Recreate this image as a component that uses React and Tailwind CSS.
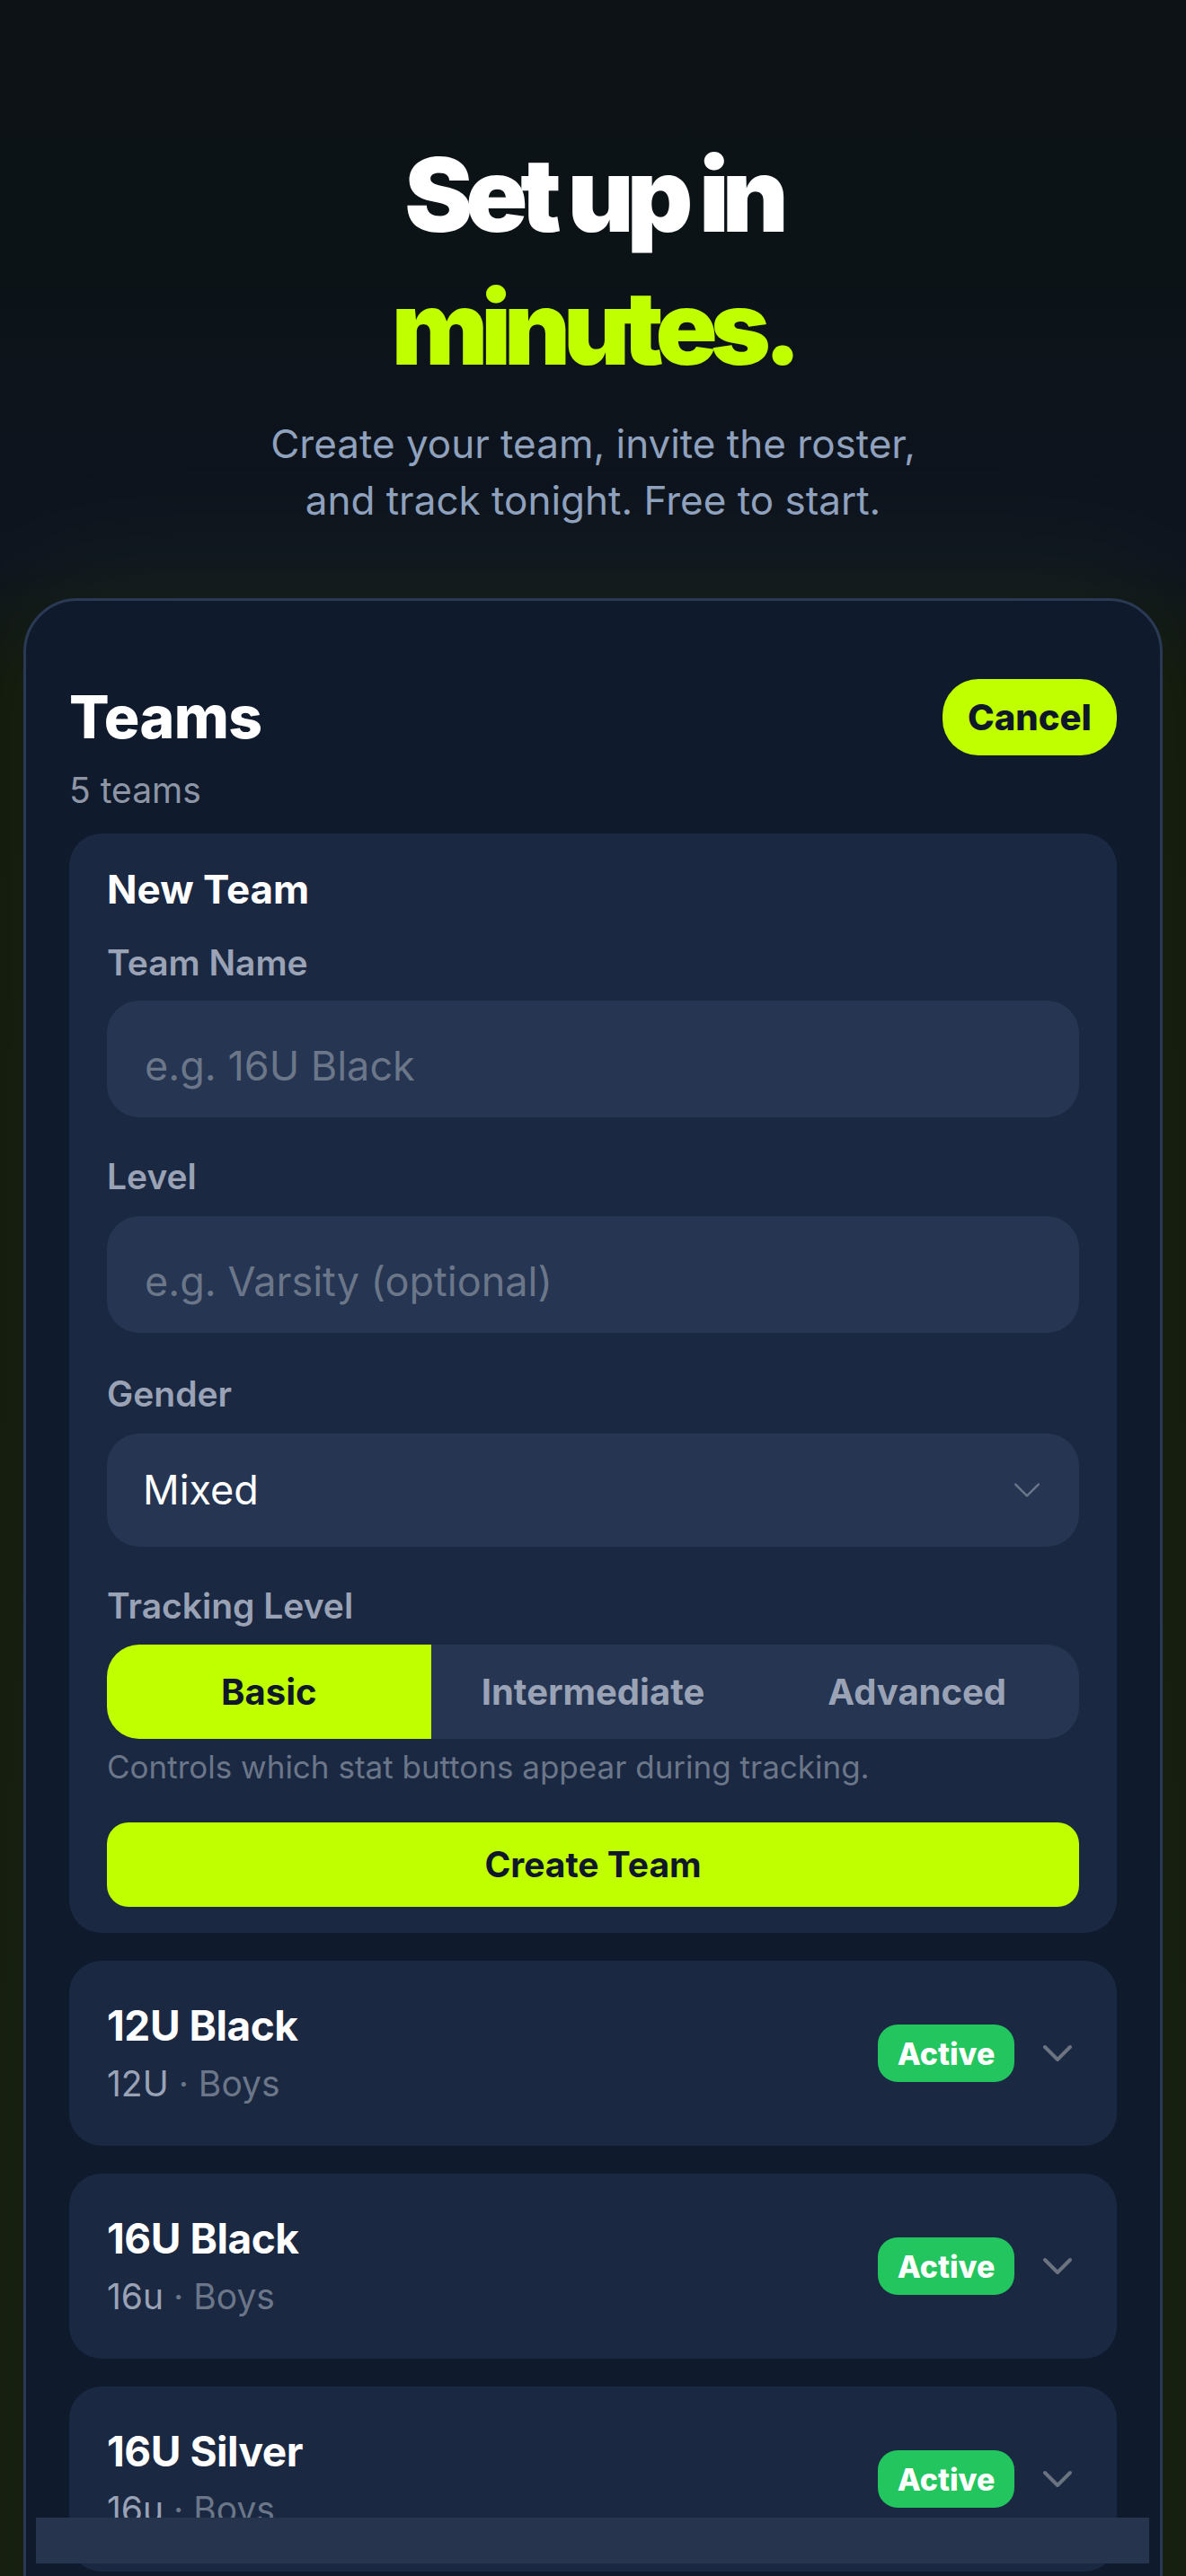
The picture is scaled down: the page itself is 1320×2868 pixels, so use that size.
import React from "react";

const teams = [
  { name: "12U Black", level: "12U", gender: "Boys" },
  { name: "16U Black", level: "16u", gender: "Boys" },
  { name: "16U Silver", level: "16u", gender: "Boys" },
  { name: "14U Gold", level: "14u", gender: "Girls" },
  { name: "18U Navy", level: "18u", gender: "Mixed" },
];

const levels = ["Basic", "Intermediate", "Advanced"];

const Chevron = ({ className, width = 4 }) => (
  <svg viewBox="0 0 48 48" className={className} fill="none">
    <path
      d="M10 17 L24 31 L38 17"
      stroke="currentColor"
      strokeWidth={width}
      strokeLinecap="round"
      strokeLinejoin="round"
    />
  </svg>
);

const Label = ({ children }) => (
  <p className="text-[39px] leading-[48px] font-semibold text-[#9aa3b5]">{children}</p>
);

const TeamRow = ({ team }) => (
  <div className="h-[206px] shrink-0 rounded-[36px] bg-[#1a2842] px-[42px] flex items-center justify-between">
    <div>
      <p className="text-[46px] leading-[52px] font-bold text-white tracking-[-0.01em]">{team.name}</p>
      <p className="mt-[16px] text-[39px] leading-[46px]">
        <span className="text-[#9aa3b5]">{team.level}</span>
        <span className="text-[#6b7689]"> · {team.gender}</span>
      </p>
    </div>
    <div className="flex items-center gap-[24px]">
      <span className="h-[64px] w-[152px] rounded-[22px] bg-[#22c55e] flex items-center justify-center text-[34px] font-extrabold text-white">
        Active
      </span>
      <Chevron className="w-[48px] h-[48px] text-[#6b7280]" />
    </div>
  </div>
);

export default function App() {
  return (
    <div className="relative h-[2868px] overflow-hidden bg-[linear-gradient(180deg,#0c1215_0%,#0c1317_300px,#0e1420_620px,#10160f_760px,#121911_100%)] font-['Inter','Noto_Sans',sans-serif]">
      {/* hero */}
      <div className="pt-[143px] text-center">
        <h1 className="text-[114px] leading-[148px] font-black tracking-[-0.07em] text-white">
          <span className="block">Set up in</span>
          <span className="block text-[#c0ff00]">minutes.</span>
        </h1>
        <p className="mt-[24px] text-[44px] leading-[63px] text-[#8fa1bd]">
          Create your team, invite the roster,
          <br />
          and track tonight. Free to start.
        </p>
      </div>

      {/* teams panel */}
      <div className="mx-[26px] mt-[77px] rounded-[60px] border-[3px] border-[#2a3a54] bg-[#0f1a2d] px-[48px] pt-[87px] pb-[60px] shadow-[0_0_160px_30px_rgba(170,230,0,0.06)]">
        <div className="flex items-center justify-between">
          <h2 className="text-[66px] leading-[85px] font-extrabold text-white tracking-[-0.01em]">Teams</h2>
          <button className="h-[85px] w-[194px] rounded-[40px] bg-[#c0ff00] text-[40px] font-extrabold text-[#0f172a]">
            Cancel
          </button>
        </div>
        <p className="mt-[16px] text-[39px] leading-[46px] text-[#8e96a6]">5 teams</p>

        {/* new team form */}
        <div className="mt-[25px] rounded-[36px] bg-[#1a2842] px-[42px] pt-[36px] pb-[29px]">
          <p className="text-[44px] leading-[52px] font-bold text-white">New Team</p>

          <div className="mt-[32px]">
            <Label>Team Name</Label>
            <input
              placeholder="e.g. 16U Black"
              className="mt-[18px] h-[130px] w-full rounded-[36px] bg-[#253552] px-[42px] pt-[14px] text-[45px] text-white placeholder:text-[#6b7689] outline-none"
            />
          </div>

          <div className="mt-[42px]">
            <Label>Level</Label>
            <input
              placeholder="e.g. Varsity (optional)"
              className="mt-[20px] h-[130px] w-full rounded-[36px] bg-[#253552] px-[42px] pt-[14px] text-[45px] text-white placeholder:text-[#6b7689] outline-none"
            />
          </div>

          <div className="mt-[44px]">
            <Label>Gender</Label>
            <div className="mt-[20px] h-[126px] w-full rounded-[36px] bg-[#253552] pl-[40px] pr-[36px] flex items-center justify-between">
              <span className="text-[45px] text-white">Mixed</span>
              <Chevron className="w-[44px] h-[44px] text-[#6b7689]" width={2.6} />
            </div>
          </div>

          <div className="mt-[42px]">
            <Label>Tracking Level</Label>
            <div className="mt-[19px] h-[105px] grid grid-cols-3 overflow-hidden rounded-[36px] bg-[#253552]">
              {levels.map((lvl, i) => (
                <div
                  key={lvl}
                  className={
                    i === 0
                      ? "flex items-center justify-center bg-[#c0ff00] text-[40px] font-bold text-[#0f172a]"
                      : "flex items-center justify-center text-[40px] font-bold text-[#9aa3b5]"
                  }
                >
                  {lvl}
                </div>
              ))}
            </div>
            <p className="mt-[11px] text-[35px] leading-[40px] text-[#6b7689]">
              Controls which stat buttons appear during tracking.
            </p>
          </div>

          <button className="mt-[42px] h-[94px] w-full rounded-[24px] bg-[#c0ff00] text-[39px] font-bold text-[#0f172a]">
            Create Team
          </button>
        </div>

        {/* team list */}
        <div className="mt-[31px] flex flex-col gap-[31px]">
          {teams.map((t) => (
            <TeamRow key={t.name} team={t} />
          ))}
        </div>
      </div>

      {/* bottom bar over the list */}
      <div className="absolute left-[40px] bottom-[14px] h-[51px] w-[1239px] bg-[#26344e]" />
    </div>
  );
}
